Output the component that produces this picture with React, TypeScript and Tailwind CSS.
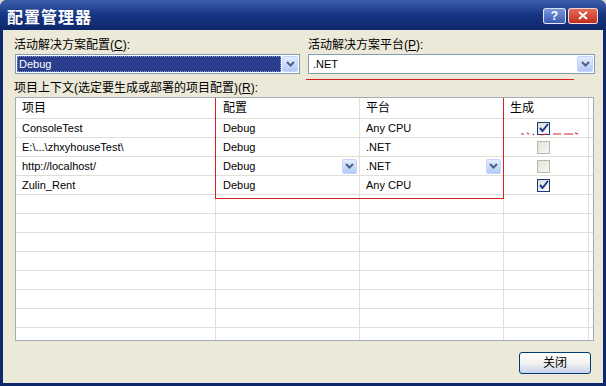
import React from 'react';

interface Row {
  name: string;
  config: string;
  platform: string;
  build: boolean;
  combo?: boolean;
}

const rows: Row[] = [
  { name: 'ConsoleTest', config: 'Debug', platform: 'Any CPU', build: true },
  { name: 'E:\\...\\zhxyhouseTest\\', config: 'Debug', platform: '.NET', build: false },
  { name: 'http://localhost/', config: 'Debug', platform: '.NET', build: false, combo: true },
  { name: 'Zulin_Rent', config: 'Debug', platform: 'Any CPU', build: true },
];

const font = { fontFamily: '"Liberation Sans", "Noto Sans CJK SC", sans-serif' };

// XP style combo arrow button
function ArrowButton({ small }: { small?: boolean }) {
  return (
    <div
      className={`flex items-center justify-center rounded-[2px] border border-[#c3d3fd] bg-gradient-to-b from-[#e6eefc] to-[#b4c9f5] ${
        small ? 'w-[15px] h-[15px]' : 'w-[16px] h-[16px]'
      }`}
    >
      <svg width="9" height="6" viewBox="0 0 9 6">
        <path d="M1 1 L4.5 4.5 L8 1" fill="none" stroke="#4d6185" strokeWidth="2" />
      </svg>
    </div>
  );
}

function Checkbox({ checked }: { checked: boolean }) {
  return (
    <div
      className={`w-[13px] h-[13px] border flex items-center justify-center ${
        checked
          ? 'border-[#1c3a78] bg-gradient-to-br from-[#dcdcd6] to-white'
          : 'border-[#b8b8b0] bg-gradient-to-br from-[#e4e3dc] to-[#f7f7f5]'
      }`}
    >
      {checked && (
        <svg width="11" height="11" viewBox="0 0 11 11">
          <path d="M2 5 L4.5 8 L10 1" fill="none" stroke="#1f3a8f" strokeWidth="2" />
        </svg>
      )}
    </div>
  );
}

function GridRow({ row }: { row?: Row }) {
  const cell = 'h-[19px] border-r border-b border-[#e2e0d6] flex items-center text-[11px] text-black';
  return (
    <>
      <div className={`${cell} pl-[6px]`}>{row?.name}</div>
      <div className={`${cell} pl-[7px] justify-between pr-[2px]`}>
        <span>{row?.config}</span>
        {row?.combo && <ArrowButton small />}
      </div>
      <div className={`${cell} pl-[6px] justify-between pr-[2px]`}>
        <span>{row?.platform}</span>
        {row?.combo && <ArrowButton small />}
      </div>
      <div className={`${cell} justify-center pr-[5px] relative`}>
        {row && <Checkbox checked={row.build} />}
        {row?.name === 'ConsoleTest' && (
          <svg className="absolute left-[17px] top-[12px]" width="58" height="6" viewBox="0 0 58 6">
            <path d="M0 3 L3 3 M6 2 L8 3 M12 3 L13 4 M20 4 L26 3 M32 3 L40 3 M43 3 L52 3 M54 2 L57 3" stroke="#d02020" strokeWidth="1.2" fill="none" />
          </svg>
        )}
      </div>
      <div className="h-[19px] border-b border-[#e2e0d6]" />
    </>
  );
}

export default function App() {
  return (
    <div className="w-[606px] h-[386px] bg-[#d6d3ca]" style={font}>
      <div className="w-[606px] h-[386px] flex flex-col rounded-t-[7px] bg-[#0e2a6e] overflow-hidden">
        {/* Title bar */}
        <div className="h-[30px] flex items-center justify-between pl-[7px] pr-[8px] bg-gradient-to-b from-[#3c5fac] via-[#163584] to-[#0d2768]">
          <span className="text-white font-bold text-[16px] tracking-[1px] mt-[1px]" style={{ fontFamily: '"Noto Sans CJK SC", sans-serif' }}>
            配置管理器
          </span>
          <div className="flex gap-[2px] mt-[1px]">
            <div className="w-[23px] h-[16px] rounded-[3px] border border-white/80 bg-gradient-to-b from-[#7b97d9] to-[#3a5cb4] flex items-center justify-center text-white text-[12px] font-bold leading-none">
              ?
            </div>
            <div className="w-[30px] h-[16px] rounded-[3px] border border-white/80 bg-gradient-to-b from-[#e86a5a] to-[#c02a1a] flex items-center justify-center">
              <svg width="10" height="9" viewBox="0 0 10 9">
                <path d="M1 1 L9 8 M9 1 L1 8" stroke="white" strokeWidth="2" />
              </svg>
            </div>
          </div>
        </div>

        {/* Body */}
        <div className="flex-1 mx-[3px] mb-[3px] bg-[#ece9d8] flex flex-col pt-[7px]">
          <div className="flex gap-[8px] ml-[11px]">
            <div className="w-[286px] flex flex-col">
              <div className="h-[16px] leading-[16px] text-[12px] text-black">
                活动解决方案配置(<u>C</u>):
              </div>
              <div className="mt-px ml-px h-[20px] border border-[#7f9db9] bg-white flex items-center p-[1px] gap-[1px]">
                <div className="flex-1 h-[16px] bg-[#2b3e8e] outline outline-1 outline-dotted outline-[#8a96c8] -outline-offset-1 text-white text-[11px] flex items-center pl-[2px]">
                  Debug
                </div>
                <ArrowButton />
              </div>
            </div>
            <div className="w-[287px] flex flex-col relative">
              <div className="h-[16px] leading-[16px] text-[12px] text-black">
                活动解决方案平台(<u>P</u>):
              </div>
              <div className="mt-px h-[20px] border border-[#7f9db9] bg-white flex items-center justify-between p-[1px]">
                <span className="text-[11px] text-black pl-[3px]">.NET</span>
                <ArrowButton />
              </div>
              <div className="absolute left-[-2px] top-[42px] w-[268px] h-px bg-[#d42020]" />
            </div>
          </div>

          <div className="mt-[6px] ml-[11px] h-[16px] leading-[16px] text-[12px] text-black">
            项目上下文(选定要生成或部署的项目配置)(<u>R</u>):
          </div>

          {/* Project grid */}
          <div className="relative mt-px ml-[12px] mr-[9px] h-[244px] border border-[#a5acb5] bg-white overflow-hidden">
            <div className="grid grid-cols-[200px_144px_144px_85px_1fr]">
              {['项目', '配置', '平台', '生成'].map((h, i) => (
                <div
                  key={h}
                  className={`h-[21px] border-r border-b border-[#e2e0d6] flex items-center text-[12px] text-black ${
                    i === 0 ? 'pl-[6px]' : i === 1 ? 'pl-[7px]' : 'pl-[6px]'
                  }`}
                >
                  {h}
                </div>
              ))}
              <div className="h-[21px] border-b border-[#e2e0d6]" />
              {rows.map((r) => (
                <GridRow key={r.name} row={r} />
              ))}
              {Array.from({ length: 8 }).map((_, i) => (
                <GridRow key={i} />
              ))}
            </div>
            {/* red annotation box */}
            <div className="absolute left-[199px] top-[-1px] w-[289px] h-[102px] border border-[#d42020]" />
          </div>

          <div className="flex justify-end mt-[11px] mr-[12px]">
            <div className="w-[72px] h-[22px] rounded-[3px] border border-[#003c74] bg-gradient-to-b from-white via-[#f2f2ee] to-[#c7d2ef] flex items-center justify-center text-[12px] text-black">
              关闭
            </div>
          </div>
        </div>
      </div>
    </div>
  );
}
